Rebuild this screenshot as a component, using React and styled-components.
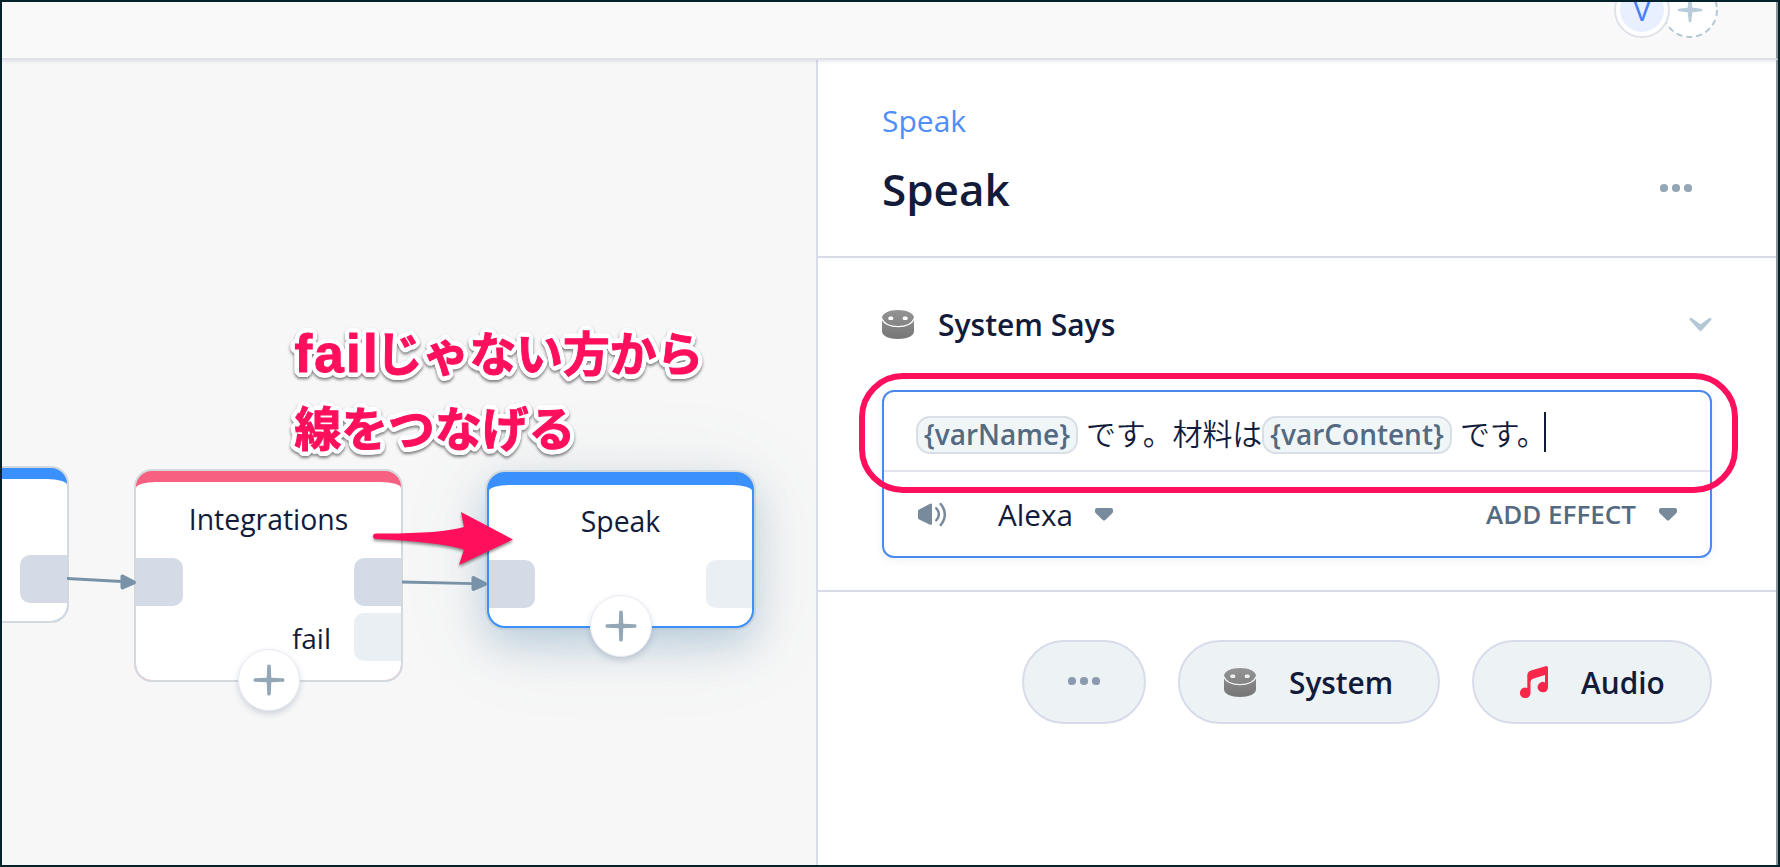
import React from 'react';
import styled, { createGlobalStyle } from 'styled-components';

const GlobalStyle = createGlobalStyle`
  * { box-sizing: border-box; }
  body { margin: 0; overflow: hidden; }
`;

const Frame = styled.div`
  width: 1780px;
  height: 867px;
  border: 2px solid #04222b;
  background: #f7f7f7;
  display: flex;
  flex-direction: column;
  overflow: hidden;
  position: relative;
  font-family: 'Open Sans', 'Noto Sans CJK JP', sans-serif;
  color: #131b3b;
`;

const Header = styled.header`
  flex: none;
  height: 58px;
  display: flex;
  justify-content: flex-end;
  align-items: flex-start;
  padding-right: 58px;
  background: #f9f9f9;
  border-bottom: 2px solid #dde1e8;
  border-right: 2px solid #8d9495;
  box-shadow: 0 1px 4px rgba(80, 100, 130, 0.18);
  z-index: 2;
`;

const Avatar = styled.div`
  width: 56px;
  height: 56px;
  margin-top: -20px;
  border-radius: 50%;
  border: 2px solid #dfe2e8;
  background: #fff;
  padding: 4px;
  z-index: 1;
`;

const AvatarInner = styled.div`
  height: 100%;
  border-radius: 50%;
  background: #e8f0ff;
  color: #4a7df6;
  font-size: 30px;
  font-weight: 500;
  line-height: 43px;
  text-align: center;
`;

const AddMember = styled.svg`
  width: 56px;
  height: 56px;
  margin: -20px 0 0 -8px;
`;

const Main = styled.div`
  flex: 1;
  display: flex;
  min-height: 0;
`;

const Canvas = styled.main`
  width: 814px;
  position: relative;
  overflow: hidden;
`;

const NodeCard = styled.section`
  position: absolute;
  left: ${(p) => p.$x}px;
  top: ${(p) => p.$y}px;
  width: ${(p) => p.$w}px;
  height: ${(p) => p.$h}px;
  padding-top: 11px;
  border: 2px solid ${(p) => (p.$active ? '#3a90fc' : '#d4d9de')};
  border-radius: 18px;
  background: ${(p) => p.$color};
  box-shadow: ${(p) =>
    p.$active
      ? '0 0 0 2px rgba(190,198,206,.55), 0 16px 40px rgba(70,125,170,.3), 0 10px 90px rgba(90,130,160,.12)'
      : 'none'};
`;

const NodeBody = styled.div`
  height: 100%;
  background: #fff;
  border-radius: 20px 20px 16px 16px / 6px 6px 16px 16px;
  display: flex;
  flex-direction: column;
`;

const NodeTitle = styled.h3`
  margin: ${(p) => p.$top}px 0 0;
  height: 38px;
  font-size: 28.4px;
  line-height: 38px;
  font-weight: 400;
  text-align: center;
`;

const PortRow = styled.div`
  display: flex;
  align-items: center;
  justify-content: ${(p) => (p.$end ? 'flex-end' : 'space-between')};
  height: 48px;
  margin-top: ${(p) => p.$top}px;
`;

const Port = styled.span`
  width: ${(p) => p.$w || 47}px;
  height: 48px;
  background: ${(p) => (p.$empty ? '#e9eff3' : '#d4dbe7')};
  border-radius: ${(p) => (p.$out ? '10px 0 0 10px' : '0 10px 10px 0')};
`;

const PortLabel = styled.span`
  font-size: 28px;
  line-height: 38px;
  margin-right: 23px;
  padding-top: 1px;
`;

const AddButton = styled.button`
  position: absolute;
  left: 50%;
  bottom: ${(p) => p.$bottom}px;
  width: 62px;
  height: 62px;
  margin-left: -31px;
  padding: 0;
  border: 1px solid #eaebf2;
  border-radius: 50%;
  background: #fff;
  box-shadow: 0 3px 6px rgba(60, 80, 120, 0.22);
  display: flex;
  align-items: center;
  justify-content: center;
`;

const Links = styled.svg`
  position: absolute;
  left: 0;
  top: 0;
`;

const outline = Array.from({ length: 24 }, (_, i) => {
  const a = (i * Math.PI) / 12;
  return `${(Math.cos(a) * 4.8).toFixed(2)}px ${(Math.sin(a) * 4.8).toFixed(2)}px 0 #fff`;
}).join(', ');

const Note = styled.p`
  position: absolute;
  left: 292.5px;
  top: 254px;
  margin: 0;
  font-family: 'Noto Sans CJK JP', sans-serif;
  font-weight: 700;
  font-size: 46.8px;
  line-height: 74.5px;
  color: #ff0f5c;
  -webkit-text-stroke: 1px #ff0f5c;
  text-shadow: ${outline};
  white-space: nowrap;
  filter: drop-shadow(0 2px 1.5px rgba(0, 0, 0, 0.5));
`;

const NoteLatin = styled.span`
  margin-right: -4px;
  font-family: 'Liberation Sans', sans-serif;
  font-size: 53px;
  line-height: 1;
  letter-spacing: 2.2px;
  vertical-align: -1px;
`;

const Panel = styled.aside`
  flex: 1;
  border-left: 2px solid #d8dcea;
  border-right: 2px solid #8d9495;
  background: #fff;
`;

const PanelHeader = styled.div`
  height: 198px;
  padding: 41px 84px 0 64px;
  border-bottom: 2px solid #d8dcea;
`;

const Breadcrumb = styled.div`
  font-size: 30px;
  line-height: 40px;
  color: #4f8ef7;
`;

const TitleRow = styled.div`
  display: flex;
  justify-content: space-between;
  align-items: center;
  margin-top: 18px;
`;

const Title = styled.h1`
  margin: 0;
  font-size: 44px;
  line-height: 60px;
  font-weight: 600;
`;

const StepSection = styled.section`
  height: 334px;
  padding: 46px 64px 0;
  border-bottom: 2px solid #d8dcea;
`;

const StepHeader = styled.div`
  display: flex;
  align-items: center;
  height: 40px;
`;

const StepTitle = styled.h2`
  flex: 1;
  margin: 0 0 0 24px;
  padding-top: 2px;
  font-size: 30px;
  line-height: 40px;
  font-weight: 600;
`;

const Editor = styled.div`
  position: relative;
  height: 168px;
  margin-top: 46px;
  border: 2px solid #4b89ee;
  border-radius: 12px;
  box-shadow: 0 2px 8px rgba(60, 80, 120, 0.08);
`;

const SpeechLine = styled.div`
  display: flex;
  align-items: center;
  height: 80px;
  padding: 7px 32px 0;
  border-bottom: 2px solid #e1e4ea;
  font-size: 30px;
  line-height: 38px;
  white-space: pre;
`;

const Variable = styled.span`
  flex: none;
  width: ${(p) => p.$w}px;
  height: 38px;
  border: 2px solid #d8dfe6;
  border-radius: 14px;
  background: #f0f6f7;
  color: #546a82;
  font-size: 28px;
  line-height: 33px;
  font-weight: 600;
  text-align: center;
`;

const Speech = styled.span`
  width: ${(p) => p.$w}px;
  height: 44px;
  padding-left: 8px;
  font-family: 'Noto Sans CJK JP', sans-serif;
  font-weight: 350;
  font-size: 30px;
  letter-spacing: -0.15px;
`;

const Caret = styled.span`
  width: 2px;
  height: 40px;
  margin-top: -6px;
  background: #131b3b;
`;

const VoiceLine = styled.div`
  display: flex;
  align-items: center;
  height: 84px;
  padding: 0 33px 0 34px;
`;

const VoiceName = styled.span`
  width: 97px;
  margin-left: 51px;
  padding-top: 2px;
  font-size: 29.7px;
  line-height: 40px;
`;

const EffectLabel = styled.span`
  margin: 0 23px 0 auto;
  font-size: 26px;
  line-height: 36px;
  font-weight: 600;
  color: #546a82;
`;

const Highlight = styled.div`
  position: absolute;
  left: -25px;
  top: -19px;
  width: 879px;
  height: 120px;
  border: 6px solid #ff0f5c;
  border-radius: 44px;
`;

const Actions = styled.footer`
  display: flex;
  justify-content: flex-end;
  gap: 32px;
  padding: 48px 64px 0;
`;

const Pill = styled.button`
  display: flex;
  align-items: center;
  justify-content: ${(p) => (p.$center ? 'center' : 'flex-start')};
  width: ${(p) => p.$w}px;
  height: 84px;
  padding: 0 0 0 ${(p) => (p.$center ? 0 : p.$pad)}px;
  gap: 33px;
  border: 2px solid #d8dcea;
  border-radius: 42px;
  background: #edf2f5;
  color: #131b3b;
  font-family: inherit;
  font-size: 29.8px;
  line-height: 40px;
  font-weight: 600;
`;

const PillLabel = styled.span`
  padding-top: 2px;
`;

const PlusIcon = ({ color = '#94a7b6', size = 32 }) => (
  <svg width={size} height={size} viewBox="-16 -16 32 32">
    <path
      fill={color}
      d="M0-15.5c1.3 0 1.8.8 1.8 1.8L2.3-2.3 13.7-1.8C14.7-1.8 15.5-1.3 15.5 0S14.7 1.8 13.7 1.8L2.3 2.3 1.8 13.7C1.8 14.7 1.3 15.5 0 15.5S-1.8 14.7-1.8 13.7L-2.3 2.3-13.7 1.8C-14.7 1.8-15.5 1.3-15.5 0S-14.7-1.8-13.7-1.8L-2.3-2.3-1.8-13.7C-1.8-14.7-1.3-15.5 0-15.5Z"
    />
  </svg>
);

const Dots = ({ color }) => (
  <svg width="32" height="12" viewBox="0 0 32 12">
    {[4, 16, 28].map((cx) => (
      <circle key={cx} cx={cx} cy="5" r="4.1" fill={color} />
    ))}
  </svg>
);

const DeviceIcon = ({ bg = '#fff' }) => (
  <svg width="32" height="29" viewBox="0 0 32 29">
    <defs>
      <linearGradient id="device" x1="0" y1="0" x2="0" y2="1">
        <stop offset="0" stopColor="#949494" />
        <stop offset="1" stopColor="#767676" />
      </linearGradient>
    </defs>
    <path d="M0 8C0 3.4 7 0 16 0s16 3.4 16 8v13.5C32 26 25 29 16 29S0 26 0 21.5Z" fill="url(#device)" />
    <path d="M0 8.5C1 13.5 8 16.7 16 16.7S31 13.5 32 8.5" fill="none" stroke={bg} strokeWidth="1.3" />
    <rect x="6.3" y="6.5" width="5" height="3.4" rx="1.5" fill={bg} />
    <rect x="20.7" y="6.5" width="5" height="3.4" rx="1.5" fill={bg} />
  </svg>
);

const ChevronIcon = () => (
  <svg width="23" height="15" viewBox="0 0 23 15">
    <path
      d="M.6 2.8C.3 1.6 1.1.2 2.2.8L11.5 7.3 20.8.8C21.9.2 22.7 1.6 22.4 2.8L12.5 13.8Q11.5 14.7 10.5 13.8Z"
      fill="#b3c7d6"
    />
  </svg>
);

const TriangleIcon = () => (
  <svg width="18" height="13" viewBox="0 0 18 13">
    <path
      d="M2 0H16Q18 0 18 2V3.5Q18 4.5 17.2 5.3L10.3 12Q9 13.2 7.7 12L.8 5.3Q0 4.5 0 3.5V2Q0 0 2 0Z"
      fill="#788b9c"
    />
  </svg>
);

const SpeakerIcon = () => (
  <svg width="29" height="25" viewBox="0 0 29 25">
    <path d="M0 9Q0 7.8 1.2 7.4L11.5 2Q14 .8 14 3V21.5Q14 23.7 11.5 22.5L1.2 17.5Q0 17 0 15.8Z" fill="#788b9c" />
    <path d="M18.3 6.2Q23.5 12.3 18.3 18.3M22.7 2Q31 12.3 22.7 23" fill="none" stroke="#788b9c" strokeWidth="2.5" strokeLinecap="round" />
  </svg>
);

const MusicIcon = () => (
  <svg width="28" height="32" viewBox="0 0 28 32">
    <path
      d="M7.3 22V9.5Q7.3 6 11 4.6L25.5.2Q28 -.4 28 2V21Q28 26.3 22.7 26.3A5.2 5.2 0 1 1 25 16.4V9L13 12.7Q10.5 13.5 10.5 16V26.5A5.3 5.3 0 1 1 7.3 22Z"
      fill="#f92749"
    />
  </svg>
);

const NoteArrow = styled.path`
  fill: #ff0f5c;
  filter: drop-shadow(0 2px 1.5px rgba(0, 0, 0, 0.45));
`;

export default function App() {
  return (
    <Frame>
      <GlobalStyle />
      <Header>
        <Avatar>
          <AvatarInner>V</AvatarInner>
        </Avatar>
        <AddMember viewBox="-28 -28 56 56">
          <circle r="27" fill="#fff" stroke="#b5c8d6" strokeWidth="2" strokeDasharray="6 4" />
          <path
            d="M0-11 1.2-1.2 11 0 1.2 1.2 0 11-1.2 1.2-11 0-1.2-1.2Z"
            fill="#b9ccd9"
            stroke="#b9ccd9"
            strokeWidth="2.6"
            strokeLinejoin="round"
          />
        </AddMember>
      </Header>
      <Main>
        <Canvas>
          <NodeCard $x={-202} $y={406} $w={269} $h={157} $color="#3a90fc">
            <NodeBody>
              <PortRow $top={76} $end>
                <Port $out />
              </PortRow>
            </NodeBody>
          </NodeCard>
          <NodeCard $x={485} $y={412} $w={267} $h={156} $color="#3a90fc" $active>
            <NodeBody>
              <NodeTitle $top={17}>Speak</NodeTitle>
              <PortRow $top={20}>
                <Port $w={46} />
                <Port $out $empty $w={46} />
              </PortRow>
            </NodeBody>
            <AddButton $bottom={-31}>
              <PlusIcon />
            </AddButton>
          </NodeCard>
          <NodeCard $x={132} $y={409} $w={269} $h={213} $color="#f76080">
            <NodeBody>
              <NodeTitle $top={18}>Integrations</NodeTitle>
              <PortRow $top={20}>
                <Port />
                <Port $out />
              </PortRow>
              <PortRow $top={7} $end>
                <PortLabel>fail</PortLabel>
                <Port $out $empty />
              </PortRow>
            </NodeBody>
            <AddButton $bottom={-31}>
              <PlusIcon />
            </AddButton>
          </NodeCard>
          <Links width="814" height="805" viewBox="2 60 814 805">
            <g stroke="#7992a8" strokeWidth="2.8" fill="none">
              <path d="M67 578.5 122 581.5" />
              <path d="M402 582 474 583.7" />
            </g>
            <g fill="#7992a8" stroke="#7992a8" strokeWidth="4" strokeLinejoin="round">
              <path d="M122.5 576.5V587.5L134 582.5Z" />
              <path d="M473.5 578V589L485 584Z" />
            </g>
            <NoteArrow d="M376 533.5Q440 534 464 527L461 512 513 539.5 459 565 464 549.5Q440 542 376 539Q373 538.5 373 536.2T376 533.5Z" />
          </Links>
          <Note>
            <NoteLatin>fail</NoteLatin>じゃない方から
            <br />
            線をつなげる
          </Note>
        </Canvas>
        <Panel>
          <PanelHeader>
            <Breadcrumb>Speak</Breadcrumb>
            <TitleRow>
              <Title>Speak</Title>
              <Dots color="#94a7b6" />
            </TitleRow>
          </PanelHeader>
          <StepSection>
            <StepHeader>
              <DeviceIcon />
              <StepTitle>System Says</StepTitle>
              <ChevronIcon />
            </StepHeader>
            <Editor>
              <SpeechLine>
                <Variable $w={162}>{'{varName}'}</Variable>
                <Speech $w={184}>です。材料は</Speech>
                <Variable $w={190}>{'{varContent}'}</Variable>
                <Speech $w={92}>です。</Speech>
                <Caret />
              </SpeechLine>
              <VoiceLine>
                <SpeakerIcon />
                <VoiceName>Alexa</VoiceName>
                <TriangleIcon />
                <EffectLabel>ADD EFFECT</EffectLabel>
                <TriangleIcon />
              </VoiceLine>
              <Highlight />
            </Editor>
          </StepSection>
          <Actions>
            <Pill $w={124} $center>
              <Dots color="#8a9bb0" />
            </Pill>
            <Pill $w={262} $pad={44}>
              <DeviceIcon bg="#edf2f5" />
              <PillLabel>System</PillLabel>
            </Pill>
            <Pill $w={240} $pad={46}>
              <MusicIcon />
              <PillLabel>Audio</PillLabel>
            </Pill>
          </Actions>
        </Panel>
      </Main>
    </Frame>
  );
}
